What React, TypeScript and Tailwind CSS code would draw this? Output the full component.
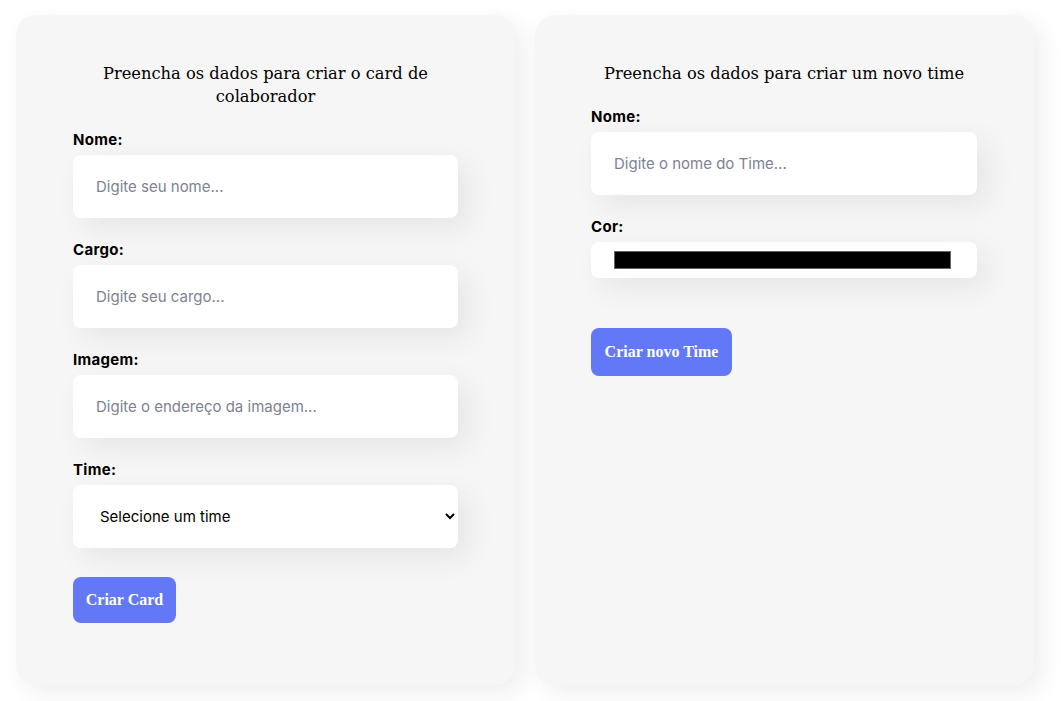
import React, { useState } from 'react'

const labelCls = 'block text-[15px] tracking-[0.02em] font-bold text-black mb-[6px] leading-[18px] font-["Inter",sans-serif]'
const inputCls =
  'w-full h-[63px] bg-white rounded-lg px-[23px] text-[15px] text-black outline-none shadow-[10px_10px_30px_rgba(0,0,0,0.07)] placeholder:text-[#7d8291] font-["Inter",sans-serif]'

const Field: React.FC<{ label: string; placeholder: string }> = ({ label, placeholder }) => (
  <div className="mb-[23px]">
    <label className={labelCls}>{label}</label>
    <input type="text" placeholder={placeholder} className={inputCls} />
  </div>
)

export default function App() {
  const [cor, setCor] = useState('#000000')

  return (
    <div className="min-h-screen bg-white">
      <div className="flex gap-5 px-4 pt-[15px] pb-[15px]">
        <form
          className="w-[499px] bg-[#f6f6f6] rounded-[20px] shadow-[8px_8px_24px_rgba(0,0,0,0.07)] px-[57px] pt-[47px] pb-[62px]"
          onSubmit={e => e.preventDefault()}
        >
          <h2 className="text-center text-[16.3px] leading-[23px] text-black mb-[23px] px-4 font-['DejaVu_Serif',serif]">
            Preencha os dados para criar o card de colaborador
          </h2>
          <Field label="Nome:" placeholder="Digite seu nome..." />
          <Field label="Cargo:" placeholder="Digite seu cargo..." />
          <Field label="Imagem:" placeholder="Digite o endereço da imagem..." />
          <div className="mb-[29px]">
            <label className={labelCls}>Time:</label>
            <select
              defaultValue=""
              className="w-full h-[63px] bg-white rounded-lg pl-[23px] pr-[10px] text-[15px] text-black outline-none shadow-[10px_10px_30px_rgba(0,0,0,0.07)] font-['Inter',sans-serif]"
            >
              <option value="">Selecione um time</option>
              <option>Programação</option>
              <option>Front-End</option>
              <option>Data Science</option>
            </select>
          </div>
          <button className="h-[46px] w-[103px] rounded-lg bg-[#6278f7] text-white text-[16px] font-bold font-['Liberation_Serif',serif]">
            Criar Card
          </button>
        </form>

        <form
          className="w-[499px] bg-[#f6f6f6] rounded-[20px] shadow-[8px_8px_24px_rgba(0,0,0,0.07)] pl-[56px] pr-[57px] pt-[47px] pb-[62px]"
          onSubmit={e => e.preventDefault()}
        >
          <h2 className="text-center text-[16.3px] leading-[23px] text-black mb-[23px] font-['DejaVu_Serif',serif]">
            Preencha os dados para criar um novo time
          </h2>
          <Field label="Nome:" placeholder="Digite o nome do Time..." />
          <div className="mb-[50px]">
            <label className={labelCls}>Cor:</label>
            <div className="w-full h-[36px] bg-white rounded-lg pl-[23px] pr-[26px] flex items-center shadow-[10px_10px_30px_rgba(0,0,0,0.07)]">
              <input
                type="color"
                value={cor}
                onChange={e => setCor(e.target.value)}
                className="w-full h-[18px] p-0 border-0 bg-transparent cursor-pointer [&::-webkit-color-swatch-wrapper]:p-0 [&::-webkit-color-swatch]:border [&::-webkit-color-swatch]:border-[#666] [&::-webkit-color-swatch]:rounded-none"
              />
            </div>
          </div>
          <button className="h-[48px] w-[141px] rounded-lg bg-[#6278f7] text-white text-[16px] font-bold font-['Liberation_Serif',serif]">
            Criar novo Time
          </button>
        </form>
      </div>
    </div>
  )
}
